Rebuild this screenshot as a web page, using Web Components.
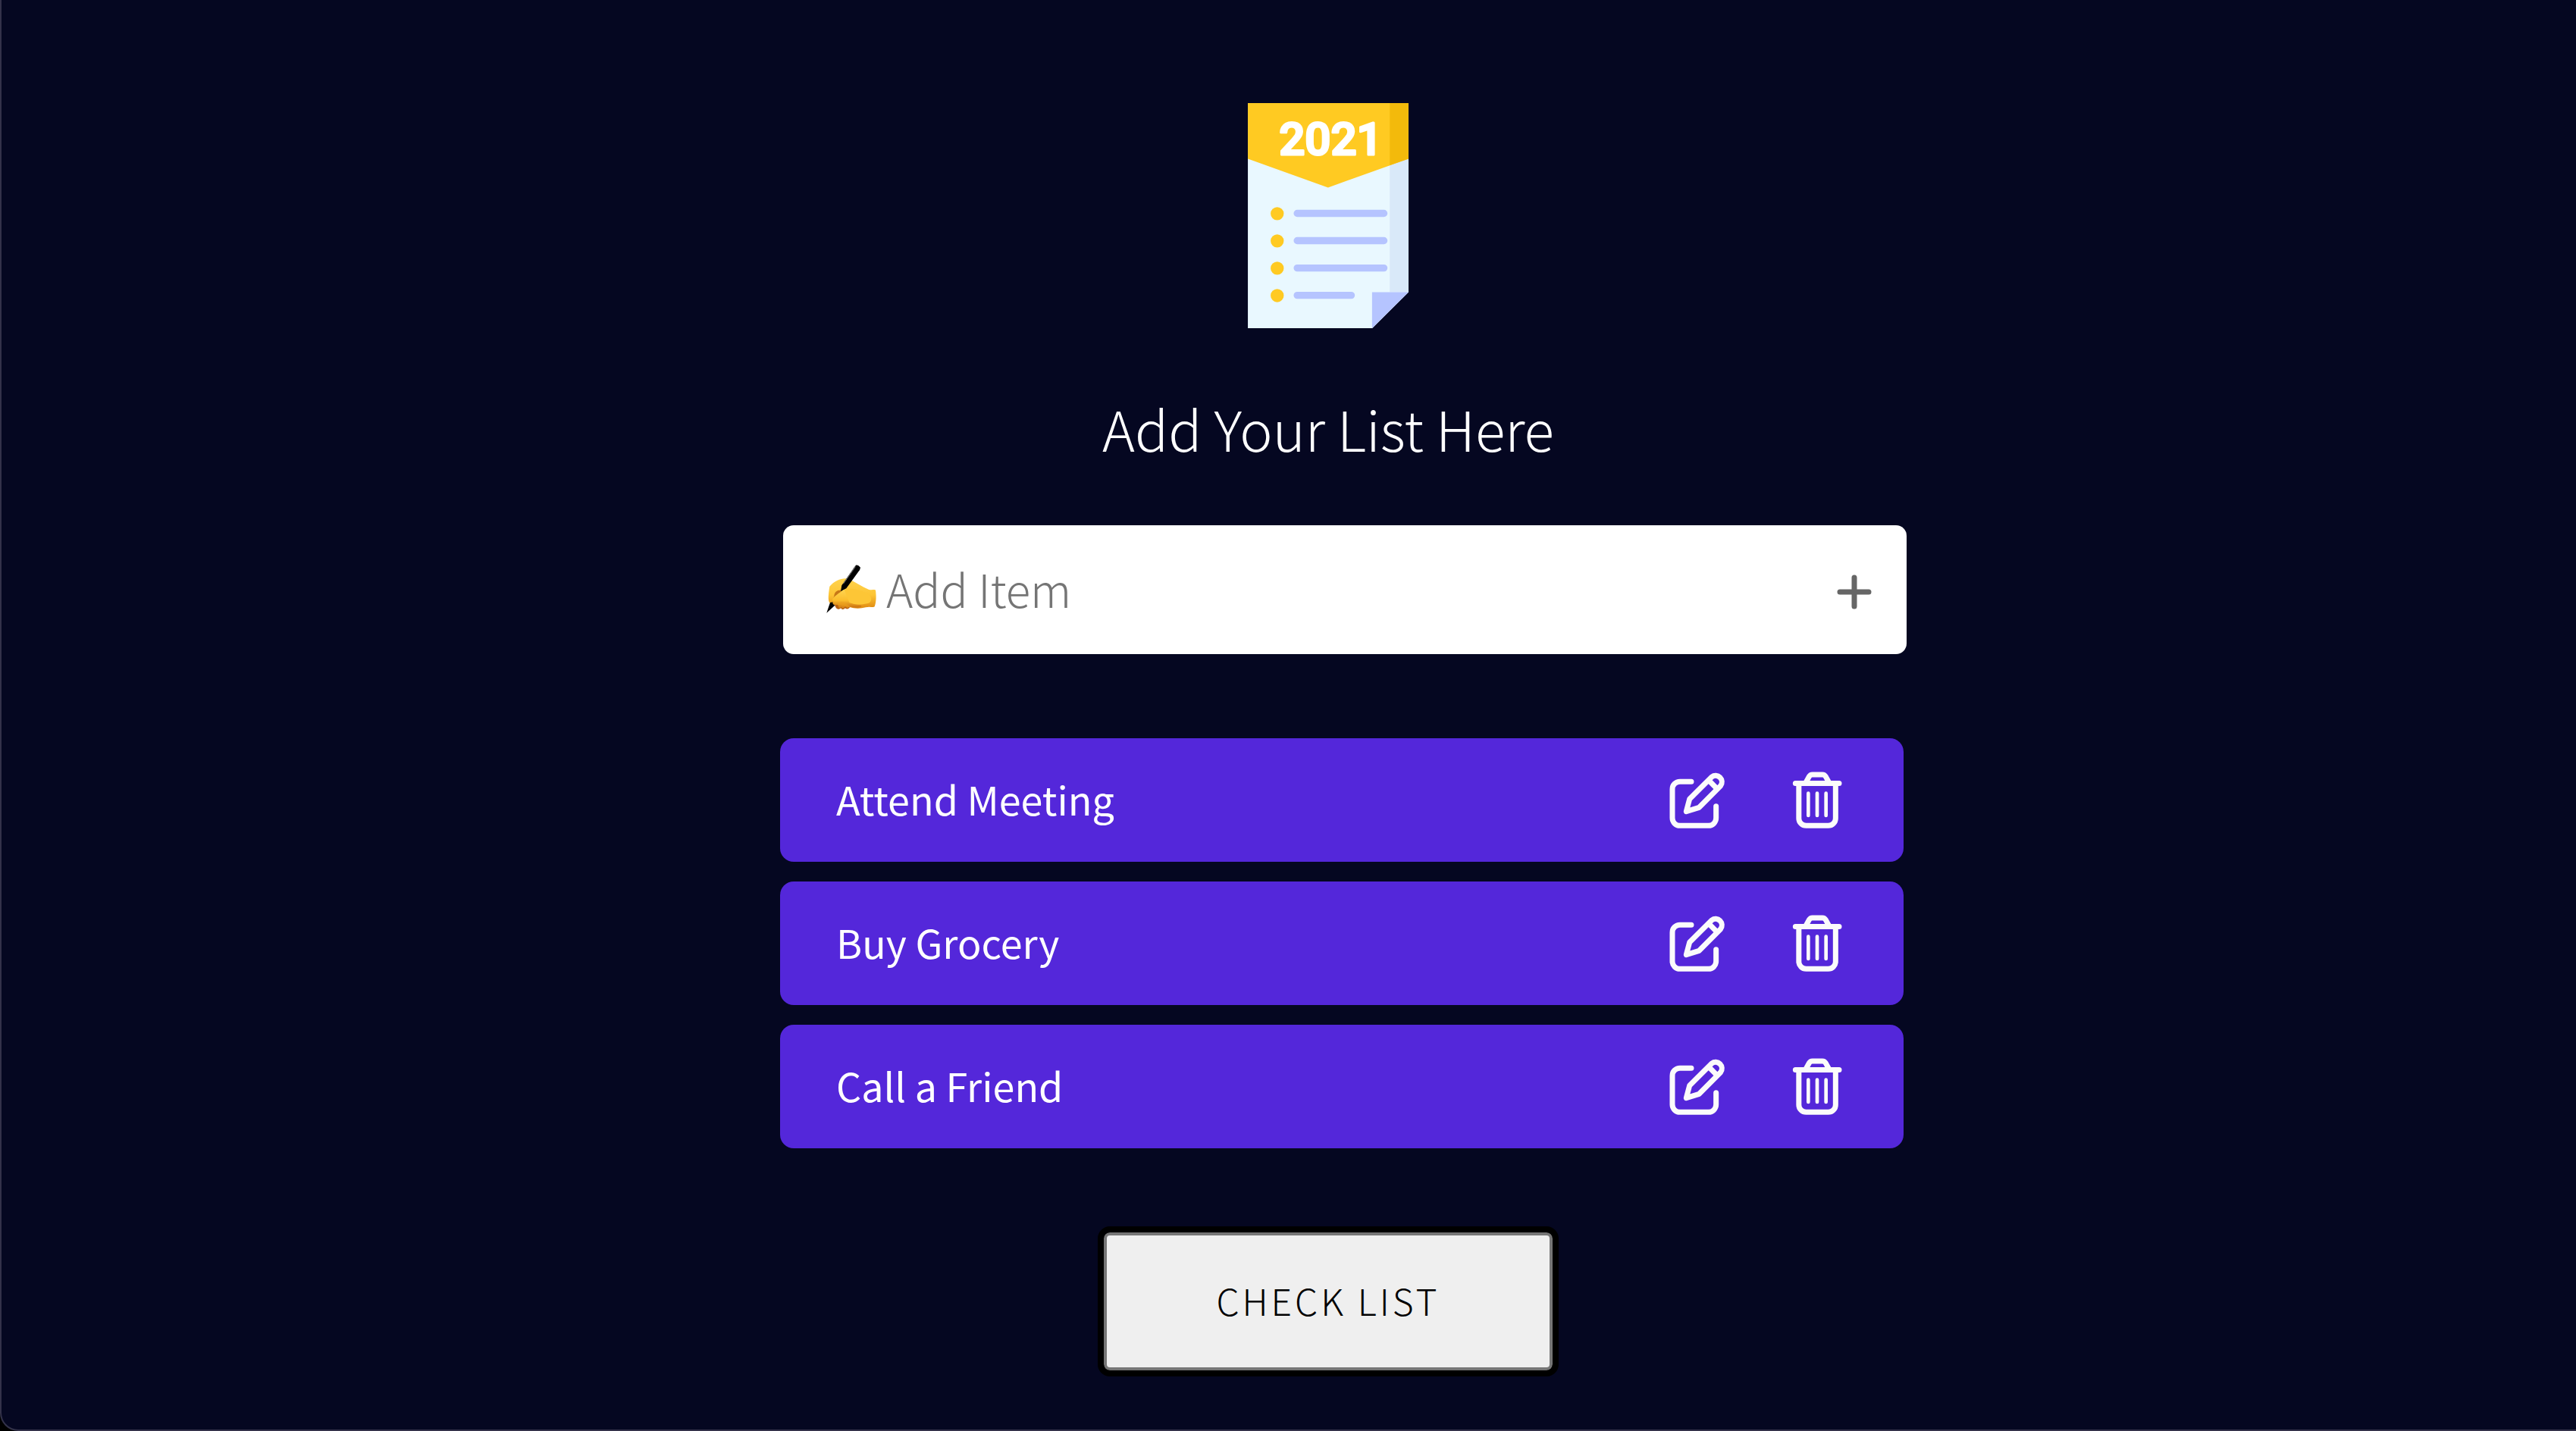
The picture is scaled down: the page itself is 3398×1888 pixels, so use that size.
<!DOCTYPE html>
<html lang="en">
<head>
<meta charset="utf-8">
<title>Check List</title>
<style>
  html { height: 100%; background: #000; }
  body {
    margin: 0;
    min-height: 100%;
    display: flex;
    color: #fff;
    font-family: "Noto Sans CJK SC", "Noto Sans", sans-serif;
    font-weight: 300;
  }
</style>
</head>
<body>
<todo-app>
  <todo-item>Attend Meeting</todo-item>
  <todo-item>Buy Grocery</todo-item>
  <todo-item>Call a Friend</todo-item>
</todo-app>

<template id="todo-app">
  <style>
    :host {
      flex: 1;
      box-sizing: border-box;
      display: flex;
      flex-direction: column;
      align-items: center;
      padding: 136px 0 72px 104px;
      background: #050721;
      border: solid #33324a;
      border-width: 0 0 2px 2px;
      border-bottom-left-radius: 24px;
    }
    h1 {
      margin: 75px 0 73px;
      font-size: 73px;
      line-height: 112px;
      font-weight: 300;
    }
    .wide { width: 1482px; max-width: 100%; }
    todo-entry { padding-left: 44px; }
    .list {
      display: flex;
      flex-direction: column;
      gap: 26px;
      margin: 111px 0;
      padding-left: 36px;
    }
    .check {
      box-sizing: border-box;
      width: 592px;
      height: 182px;
      padding: 0 0 4px;
      border: 4px solid #767676;
      border-radius: 8px;
      background: #efefef;
      box-shadow: 0 0 0 1px #000;
      outline: 8px solid #000;
      color: #000;
      font: inherit;
      font-size: 48px;
      line-height: 72px;
      letter-spacing: 4px;
      text-transform: uppercase;
    }
  </style>
  <todo-logo></todo-logo>
  <h1>Add Your List Here</h1>
  <todo-entry class="wide"></todo-entry>
  <div class="wide list" role="list"><slot></slot></div>
  <button class="check" type="button">Check List</button>
</template>

<template id="todo-logo">
  <style>
    :host { display: block; }
    svg { display: block; width: 212px; height: 297px; overflow: visible; }
  </style>
  <svg viewBox="78 48 635 890" role="img" aria-label="2021 list">
    <path fill="#e9f8ff" d="M78 48H713V796L570 938H78Z"/>
    <path fill="#d9e9f9" d="M639 48H713V796H639Z"/>
    <path fill="#ffca22" d="M78 48H713V268L395 382L78 268Z"/>
    <path fill="#f3ba0b" d="M639 48H713V268L639 294Z"/>
    <path fill="#b5c4ff" d="M569 796H713L569 938Z"/>
    <g fill="#ffca22">
      <circle cx="194" cy="485" r="26"/><circle cx="194" cy="593" r="26"/>
      <circle cx="194" cy="701" r="26"/><circle cx="194" cy="809" r="26"/>
    </g>
    <path stroke="#b5c4ff" stroke-width="28" stroke-linecap="round" d="M273 484H616M273 592H616M273 700H616M273 808H487"/>
    <text x="406" y="252" text-anchor="middle" font-family="Roboto, sans-serif" font-size="180" font-weight="500" fill="#fff" stroke="#fff" stroke-width="9" stroke-linejoin="round">2021</text>
  </svg>
</template>

<template id="todo-entry">
  <style>
    :host { display: block; }
    form {
      display: flex;
      align-items: center;
      height: 170px;
      padding: 0 42px 0 56px;
      border-radius: 14px;
      background: #fff;
    }
    label { display: flex; }
    .hand { width: 68px; height: 68px; }
    input {
      flex: 1;
      min-width: 0;
      margin: 0;
      padding: 0 0 4px 12px;
      border: 0;
      outline: 0;
      background: none;
      color: #222;
      font: inherit;
      font-size: 60px;
      line-height: 86px;
      height: 86px;
    }
    input::placeholder { color: #757575; opacity: 1; }
    button { display: flex; padding: 0; border: 0; background: none; color: #666; }
    button svg { width: 54px; height: 54px; }
  </style>
  <form>
    <label for="item" aria-label="Add Item">
      <svg class="hand" viewBox="236 219 204 204" aria-hidden="true">
        <defs>
          <linearGradient id="skin" x1="0" y1="0" x2="0" y2="1">
            <stop offset="0" stop-color="#ffd34e"/><stop offset=".55" stop-color="#fdc535"/><stop offset="1" stop-color="#e08a10"/>
          </linearGradient>
          <linearGradient id="thumb" x1="0" y1="0" x2="0" y2="1">
            <stop offset="0" stop-color="#ffd552"/><stop offset=".6" stop-color="#fbbd2c"/><stop offset="1" stop-color="#c96f10"/>
          </linearGradient>
        </defs>
        <path fill="#b9600f" d="M268 375C275 388 278 398 287 398C291 399 296 393 298 395C301 401 309 400 313 394C318 399 326 398 330 393L340 380L300 355Z"/>
        <path fill="#d98818" d="M280 372L290 394L300 390L304 396L314 388L322 394L332 388L320 370Z"/>
        <path fill="url(#skin)" d="M252 308C270 286 300 274 320 277C352 287 378 310 408 321C422 323 432 319 434 323C437 345 437 370 430 388C426 393 410 386 395 391C374 397 348 396 334 391L258 376C244 374 246 345 252 308Z"/>
        <path fill="#c77817" d="M270 345C272 330 282 321 300 323L288 352L262 372Z"/>
        <path d="M356 224Q364 221 374 233Q373 242 366 250L318 316L296 328L300 304L350 232Z"/>
        <path fill="#000" d="M254 372L240 413L272 384L268 370Z"/>
        <path stroke="#858585" stroke-width="3" fill="none" d="M354 230L306 298"/>
        <path fill="url(#thumb)" d="M263 360C268 348 290 335 307 322C325 315 350 325 365 345L378 390C358 394 342 392 332 388C322 378 310 370 298 368C284 380 273 386 265 377Z"/>
        <path fill="#fdc636" d="M310 321C335 310 380 325 400 335C420 345 425 370 400 376C370 384 350 379 330 372Z"/>
      </svg>
    </label>
    <input id="item" type="text" placeholder="Add Item">
    <button type="submit" aria-label="Add">
      <svg viewBox="0 0 54 54" fill="none" stroke="currentColor" stroke-width="7" stroke-linecap="round"><path d="M27 11V49M8 30H46"/></svg>
    </button>
  </form>
</template>

<template id="todo-item">
  <style>
    :host {
      display: flex;
      align-items: center;
      box-sizing: border-box;
      width: 100%;
      height: 163px;
      padding: 0 76px 0 74px;
      border-radius: 18px;
      background: #5427da;
      font-size: 52px;
      font-weight: 400;
      line-height: 76px;
    }
    .text { flex: 1; padding-bottom: 4px; }
    .actions { display: flex; gap: 82px; }
    button { display: flex; padding: 0; border: 0; background: none; color: #fbfbfb; }
    svg { display: block; width: 76px; height: 76px; fill: none; stroke: currentColor; stroke-width: 21; stroke-linecap: round; stroke-linejoin: round; }
  </style>
  <span class="text"><slot></slot></span>
  <div class="actions">
    <button type="button" aria-label="Edit">
      <svg viewBox="125 203 228 228">
        <path d="M215 242.5H170a30 30 0 0 0-30 30V387a30 30 0 0 0 30 30h113a30 30 0 0 0 30-30V340"/>
        <path d="M195 361L208 312L296 224A25 25 0 0 1 331 259L246 345Z"/>
        <path stroke-linecap="butt" d="M283 237L318 272"/>
      </svg>
    </button>
    <button type="button" aria-label="Delete">
      <svg viewBox="598 203 228 228">
        <path d="M626 249.500H799M639.500 250V388a29 29 0 0 0 29 29H756a29 29 0 0 0 29-29V250M668 245L680 223Q685 215 693 215H733Q741 215 746 223L758 245"/>
        <path stroke-width="14" d="M677 289V377M712 289V377M747 289V377"/>
      </svg>
    </button>
  </div>
</template>

<script>
  class TemplateElement extends HTMLElement {
    constructor() {
      super();
      const template = document.getElementById(this.localName);
      this.attachShadow({ mode: "open" }).append(template.content.cloneNode(true));
    }
  }

  customElements.define("todo-logo", class extends TemplateElement {});

  customElements.define("todo-item", class extends TemplateElement {
    connectedCallback() {
      this.setAttribute("role", "listitem");
      this.shadowRoot.querySelector('[aria-label="Delete"]').onclick = () => this.remove();
      this.shadowRoot.querySelector('[aria-label="Edit"]').onclick = () => {
        const text = prompt("Edit item", this.textContent);
        if (text) this.textContent = text;
      };
    }
  });

  customElements.define("todo-entry", class extends TemplateElement {
    connectedCallback() {
      const input = this.shadowRoot.querySelector("input");
      this.shadowRoot.querySelector("form").onsubmit = (event) => {
        event.preventDefault();
        const text = input.value.trim();
        if (!text) return;
        this.dispatchEvent(new CustomEvent("add-item", { detail: text }));
        input.value = "";
      };
    }
  });

  customElements.define("todo-app", class extends TemplateElement {
    connectedCallback() {
      this.shadowRoot.querySelector("todo-entry").addEventListener("add-item", (event) => {
        const item = document.createElement("todo-item");
        item.textContent = event.detail;
        this.append(item);
      });
    }
  });
</script>
</body>
</html>
